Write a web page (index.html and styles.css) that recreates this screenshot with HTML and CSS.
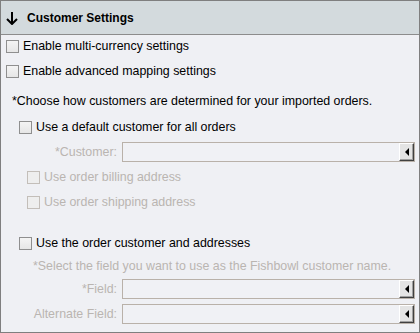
FILE: index.html
```html
<!DOCTYPE html>
<html lang="en">
<head>
  <meta charset="UTF-8" />
  <title>Customer Settings</title>
  <link rel="stylesheet" href="styles.css">
</head>
<body>
  <div class="panel">
    <div class="panel-header">
      <svg class="arrow" width="12" height="13" viewBox="0 0 12 13">
        <path d="M6 0 V11.5 M1 7 L6 12 L11 7" fill="none" stroke="#000" stroke-width="2"/>
      </svg>
      <span class="title">Customer Settings</span>
    </div>

    <div class="panel-body">
      <label class="row lvl0 r-first"><span class="check"></span>Enable multi-currency settings</label>
      <label class="row lvl0"><span class="check"></span>Enable advanced mapping settings</label>

      <div class="row note r-note">*Choose how customers are determined for your imported orders.</div>

      <label class="row lvl1 r-sub"><span class="check"></span>Use a default customer for all orders</label>
      <div class="row field">
        <span class="field-label">*Customer:</span>
        <div class="combo"><span class="combo-btn"><i class="tri"></i></span></div>
      </div>
      <label class="row lvl2 disabled"><span class="check"></span>Use order billing address</label>
      <label class="row lvl2 disabled"><span class="check"></span>Use order shipping address</label>

      <label class="row lvl1 r-group"><span class="check"></span>Use the order customer and addresses</label>
      <div class="row hint r-tight">*Select the field you want to use as the Fishbowl customer name.</div>
      <div class="row field r-tight">
        <span class="field-label">*Field:</span>
        <div class="combo"><span class="combo-btn"><i class="tri"></i></span></div>
      </div>
      <div class="row field">
        <span class="field-label">Alternate Field:</span>
        <div class="combo"><span class="combo-btn"><i class="tri"></i></span></div>
      </div>
    </div>
  </div>
</body>
</html>
```

FILE: styles.css
```css
* {
  margin: 0;
  padding: 0;
  box-sizing: border-box;
  font-family: 'Liberation Sans', Arial, sans-serif;
}

body {
  background-color: #eff0f4;
}

.panel {
  width: 420px;
  height: 333px;
  border: 1px solid #7f7f7f;
  background-color: #eff0f4;
  display: flex;
  flex-direction: column;
}

.panel-header {
  height: 34px;
  background-color: #d3dadd;
  border-bottom: 1px solid #8c8c8c;
  display: flex;
  align-items: center;
  padding-left: 5px;
  padding-top: 1px;
}

.panel-header .arrow {
  display: block;
  margin-top: 1px;
}

.panel-header .title {
  margin-left: 9px;
  font-size: 12px;
  font-weight: bold;
  color: #000;
}

.panel-body {
  display: flex;
  flex-direction: column;
  gap: 5px;
  padding-top: 1px;
}

.row {
  height: 20px;
  display: flex;
  align-items: center;
  font-size: 12.4px;
  color: #000;
}

.r-note { margin-top: 5px; }
.r-sub { margin-top: 1px; }
.r-group { margin-top: 16px; }
.r-tight { margin-top: -2px; }

.lvl0 { padding-left: 5px; }
.lvl1 { padding-left: 18px; }
.lvl2 { padding-left: 26px; }

.note { padding-left: 11px; }

.hint {
  padding-left: 32px;
  color: #bab5b1;
}

.check {
  width: 13px;
  height: 13px;
  border: 1px solid #8f8f8f;
  background: linear-gradient(#f4f4f4, #e6e6e6);
  margin-right: 4px;
  flex: none;
}

.disabled {
  color: #bab5b1;
}

.disabled .check {
  border-color: #c3beb9;
  background: #eeeeee;
}

.field {
  gap: 5px;
  padding-right: 4px;
}

.field-label {
  width: 116px;
  text-align: right;
  color: #bab5b1;
  flex: none;
}

.combo {
  flex: 1;
  height: 20px;
  border: 1px solid #b9b1a9;
  background-color: #f0f1f5;
  display: flex;
  justify-content: flex-end;
  align-items: center;
}

.combo-btn {
  width: 15px;
  height: 18px;
  background-color: #e4e4e4;
  border-top: 1px solid #ffffff;
  border-left: 1px solid #ffffff;
  border-right: 1px solid #404040;
  border-bottom: 1px solid #404040;
  box-shadow: inset -1px -1px 0 #a0a0a0;
  display: flex;
  align-items: center;
  justify-content: center;
}

.tri {
  width: 0;
  height: 0;
  border-top: 4px solid transparent;
  border-bottom: 4px solid transparent;
  border-right: 4px solid #000;
}
```
